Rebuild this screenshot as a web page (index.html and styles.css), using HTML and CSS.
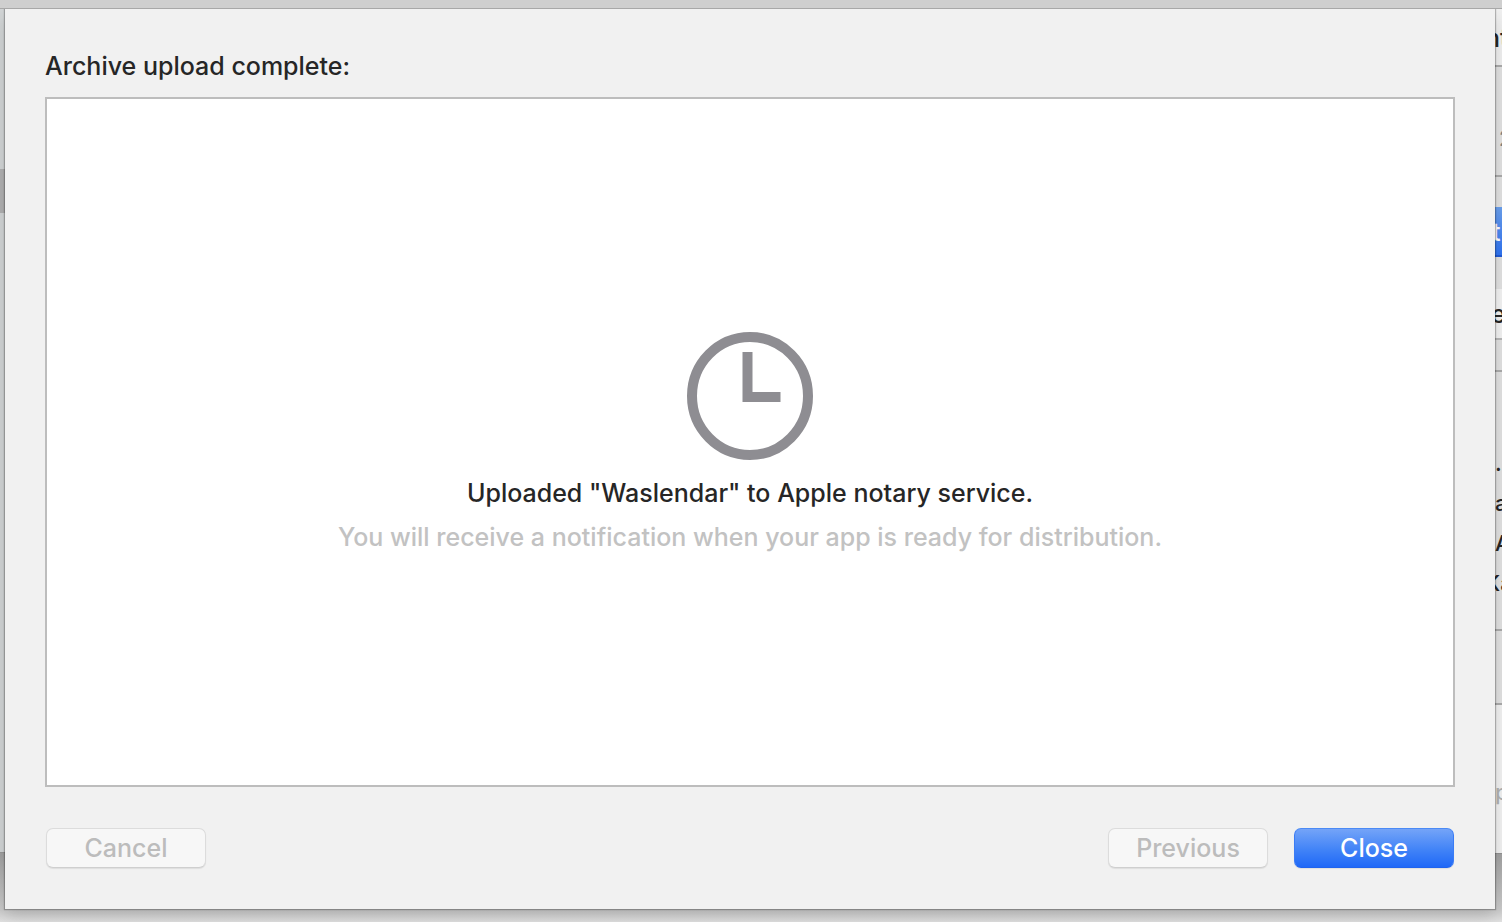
FILE: index.html
```
<!DOCTYPE html>
<html lang="en">
<head>
<meta charset="utf-8">
<title>Archive upload complete</title>
<link rel="stylesheet" href="styles.css">
</head>
<body>
<div class="desktop">
  <div class="titlebar"></div>
  <aside class="sidebar"><div class="selected-row"></div></aside>
  <main class="sheet" role="dialog" aria-labelledby="sheet-title">
    <h1 class="sheet-title" id="sheet-title">Archive upload complete:</h1>
    <section class="panel">
      <svg class="clock" viewBox="0 0 126 128" aria-hidden="true">
        <ellipse cx="63" cy="64" rx="58" ry="59" fill="none" stroke="#8e8d92" stroke-width="10"/>
        <path d="M55.500 20h10v40h28v10h-38z" fill="#8e8d92"/>
      </svg>
      <p class="message">Uploaded "Waslendar" to Apple notary service.</p>
      <p class="hint">You will receive a notification when your app is ready for distribution.</p>
    </section>
    <footer class="actions">
      <button class="button" type="button" disabled>Cancel</button>
      <button class="button push" type="button" disabled>Previous</button>
      <button class="button primary" type="button">Close</button>
    </footer>
  </main>
  <aside class="inspector">
    <div class="heading cut">nt</div>
    <div class="archive">2</div>
    <div class="controls">
      <div class="distribute">t</div>
      <div class="validate">e</div>
    </div>
    <div class="details">
      <div class="detail">.</div>
      <div class="detail">a</div>
      <div class="detail">A</div>
      <div class="detail cut">Ka</div>
    </div>
    <div class="spacer"></div>
    <div class="description">p</div>
  </aside>
</div>
</body>
</html>
```
FILE: styles.css
```
* {
  box-sizing: border-box;
}

body {
  margin: 0;
  font-family: Inter, "Liberation Sans", sans-serif;
  font-size: 25px;
  font-weight: 500;
  line-height: 32px;
  color: #262626;
}

.desktop {
  display: grid;
  grid-template-columns: 5px minmax(0, 1fr) 7px;
  grid-template-rows: 9px minmax(0, 1fr) 13px;
  height: 100vh;
  overflow: hidden;
  background: linear-gradient(to top, #e2e2e2, #cacaca 13px, #a2a2a2 68px);
}

.titlebar {
  z-index: 2;
  grid-column: 1 / -1;
  background: #cfcfcf;
  border-bottom: 1px solid #a8a8a8;
}

.sidebar {
  margin-bottom: 56px;
  padding-top: 160px;
  background: #d2d5d6;
  border-bottom: 1px solid #989898;
}

.selected-row {
  height: 44px;
  background: #b0b0b1;
}

.sheet {
  z-index: 1;
  display: flex;
  flex-direction: column;
  padding: 41px 40px;
  background: #f1f1f1;
  box-shadow: 0 0 1px 1px rgba(0, 0, 0, 0.25), 0 8px 16px rgba(0, 0, 0, 0.15);
}

.sheet-title {
  margin: 0 0 15px;
  font-size: 25px;
  font-weight: 500;
}

.panel {
  flex: 1;
  display: flex;
  flex-direction: column;
  align-items: center;
  justify-content: center;
  background: #fff;
  border: 2px solid #bdbdbd;
  text-align: center;
}

.clock {
  width: 126px;
  height: 128px;
  margin-bottom: 17px;
}

.message {
  margin: 0 0 12px;
}

.hint {
  margin: 0;
  color: #c2c2c2;
}

.actions {
  display: flex;
  gap: 26px;
  padding: 41px 1px 0;
}

.button {
  width: 160px;
  height: 40px;
  padding: 0;
  font: inherit;
  color: #bcbcbc;
  background: #f7f7f7;
  border: 1px solid #dcdcdc;
  border-bottom-color: #cfcfcf;
  border-radius: 7px;
  box-shadow: 0 1px 1px rgba(0, 0, 0, 0.08);
}

.push {
  margin-left: auto;
}

.primary {
  color: #fff;
  background: linear-gradient(#74a4f8, #4183f7 55%, #1f68f7);
  border-color: #4b8af5 #3b7cf5 #1f63ee;
}

.inspector {
  display: flex;
  flex-direction: column;
  overflow: hidden;
  margin-bottom: 55px;
  background: #e2e2e2;
  border-bottom: 1px solid #929292;
}

.heading {
  height: 58px;
  padding-top: 13px;
  background: #f0f0f0;
  border-bottom: 2px solid #acacac;
}

.cut {
  text-indent: -10px;
}

.archive {
  height: 110px;
  padding: 55px 0 0 4px;
  font-size: 22px;
  color: #808080;
  border-bottom: 2px solid #acacac;
}

.controls {
  display: grid;
  gap: 32px;
  padding: 30px 0;
  border-bottom: 2px solid #acacac;
}

.distribute {
  height: 50px;
  padding-top: 9px;
  text-indent: -3px;
  color: #fff;
  background: linear-gradient(#6ba0ee, #2f74f2);
  border-bottom: 2px solid #205bd8;
}

.validate {
  height: 51px;
  padding-top: 9px;
  text-indent: -4px;
  background: #f3f3f3;
  border-bottom: 2px solid #b8b8b8;
}

.details {
  height: 259px;
  padding-top: 71px;
  font-size: 22px;
  line-height: 40px;
  border-bottom: 2px solid #acacac;
}

.spacer {
  height: 74px;
  border-bottom: 2px solid #acacac;
}

.description {
  flex: 1;
  padding-top: 71px;
  font-size: 22px;
  color: #b2b2b2;
  background: #f2f2f2;
}
```
